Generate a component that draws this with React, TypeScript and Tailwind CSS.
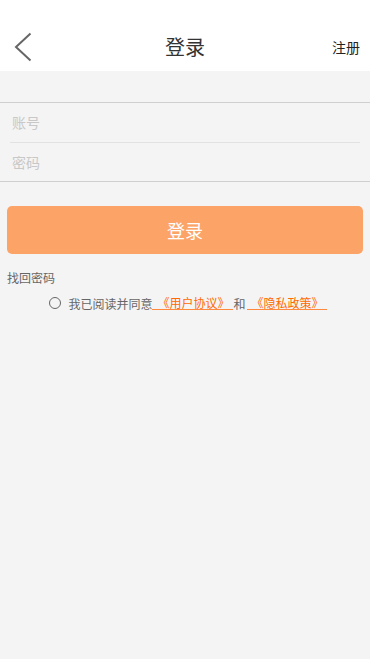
import React from "react";

export default function App() {
  return (
    <div
      className="w-[370px] h-[659px] bg-[#f4f4f4] flex flex-col"
      style={{ fontFamily: '"Noto Sans CJK SC", "Noto Sans", sans-serif' }}
    >
      <div className="h-[71px] bg-white flex items-end shrink-0">
        <div className="w-full h-[48px] flex items-center justify-between relative">
          <div className="w-[60px] pl-[14px] flex items-center">
            <svg width="18" height="30" viewBox="0 0 18 30" fill="none">
              <path d="M16.5 1.5 L2 15 L16.5 28.5" stroke="#666" strokeWidth="2" />
            </svg>
          </div>
          <div className="text-[20px] text-[#333] leading-none">登录</div>
          <div className="w-[60px] pr-[10px] text-right text-[14px] text-[#222] leading-none">注册</div>
        </div>
      </div>
      <div className="h-[31px] shrink-0" />
      <div className="border-t border-b border-[#cfcfcf]">
        <div className="h-[40px] mx-[10px] border-b border-[#e2e2e2] flex items-center">
          <span className="pl-[2px] text-[14px] text-[#c8c8c8]">账号</span>
        </div>
        <div className="h-[38px] mx-[10px] flex items-center">
          <span className="pl-[2px] text-[14px] text-[#c8c8c8]">密码</span>
        </div>
      </div>
      <div className="px-[7px] pt-[24px]">
        <div className="h-[48px] rounded-[5px] bg-[#fca467] flex items-center justify-center text-white text-[18px]">
          登录
        </div>
      </div>
      <div className="px-[7px] pt-[18px] text-[12px] text-[#666] leading-none">找回密码</div>
      <div className="pt-[12px] flex items-center justify-center text-[12px] leading-[13px] pl-[6px]">
        <span className="w-[12px] h-[12px] rounded-full border border-[#666] mr-[7px] shrink-0" />
        <span className="text-[#666]">我已阅读并同意</span>
        <span className="inline-block text-[#ff6a00] border-b border-[#ff8a3d] pl-[5px] pr-[3px]">《用户协议》</span>
        <span className="text-[#666] px-[1px]">和</span>
        <span className="inline-block text-[#ff6a00] border-b border-[#ff8a3d] pl-[5px] pr-[3px]">《隐私政策》</span>
      </div>
    </div>
  );
}
